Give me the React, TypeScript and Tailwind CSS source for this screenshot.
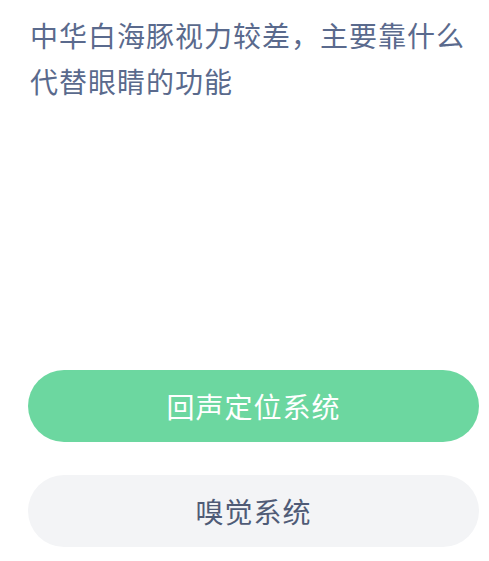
import React from "react";

export default function App() {
  return (
    <div
      className="w-[489px] h-[561px] bg-white flex flex-col overflow-hidden"
      style={{ fontFamily: '"Noto Sans CJK SC", "Noto Sans", sans-serif' }}
    >
      <div className="pl-[30px] pt-[12px] text-[28px] leading-[46px] tracking-[1px] text-[#5a6a8d] whitespace-nowrap">
        中华白海豚视力较差，主要靠什么
        <br />
        代替眼睛的功能
      </div>
      <div className="flex-1" />
      <div className="flex flex-col gap-[33px] pb-[14px] pl-[28px] pr-[10px]">
        <button className="h-[72px] rounded-full bg-[#6cd7a0] text-white text-[28px] tracking-[1px] flex items-center justify-center">
          回声定位系统
        </button>
        <button className="h-[72px] rounded-full bg-[#f3f4f6] text-[#4f5b76] text-[28px] tracking-[1px] flex items-center justify-center">
          嗅觉系统
        </button>
      </div>
    </div>
  );
}
